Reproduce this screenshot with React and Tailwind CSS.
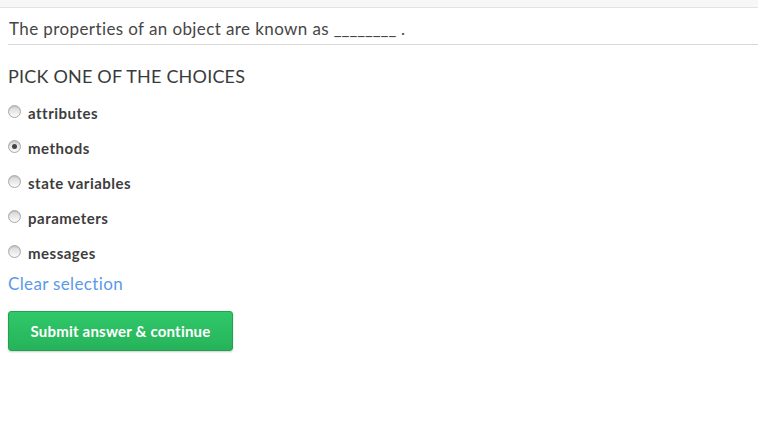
import { useState } from "react";

const choices = ["attributes", "methods", "state variables", "parameters", "messages"];

function Radio({ checked }) {
  return (
    <span className="relative -top-[2px] flex size-[13px] shrink-0 items-center justify-center rounded-full border border-[#a9a9a9] bg-gradient-to-b from-[#d6d6d6] to-[#fbfbfb] shadow-[inset_0_1px_1px_rgba(0,0,0,0.12)]">
      {checked && <span className="size-[5px] rounded-full bg-[#444]" />}
    </span>
  );
}

export default function App() {
  const [selected, setSelected] = useState(1);

  return (
    <div className="min-h-[444px] bg-white font-['Lato',sans-serif] text-[#333]">
      <div className="h-[8px] border-b border-[#e3e3e3] bg-[#f7f7f7]" />
      <div className="pl-2">
        <div className="border-b border-[#d8d8d8] pt-[9px] pb-[3px] pl-px text-[17px] leading-6 tracking-[0.4px] text-[#464646]">
          The properties of an object are known as <span className="tracking-normal">________</span> .
        </div>
        <h2 className="mt-[19px] text-[18px] leading-6 tracking-[0.2px] text-[#3a3a3a]">PICK ONE OF THE CHOICES</h2>
        <div className="mt-[11px] flex flex-col">
          {choices.map((choice, index) => (
            <label key={choice} onClick={() => setSelected(index)} className="flex h-[35px] cursor-pointer items-center gap-[7px] pb-[6px]">
              <Radio checked={selected === index} />
              <span className="text-[15px] font-bold tracking-[0.5px] text-[#3d3d3d]">{choice}</span>
            </label>
          ))}
        </div>
        <button type="button" onClick={() => setSelected(null)} className="-mt-[2px] block text-[17px] leading-6 tracking-[0.35px] text-[#5a9ae8]">
          Clear selection
        </button>
        <button type="button" className="mt-[15px] h-[40px] w-[225px] rounded-[3px] border border-[#23a04f] bg-gradient-to-b from-[#30c86a] to-[#26b359] text-[15px] font-bold tracking-[0.2px] text-white shadow-[0_1px_2px_rgba(0,0,0,0.2)]">
          Submit answer &amp; continue
        </button>
      </div>
    </div>
  );
}
